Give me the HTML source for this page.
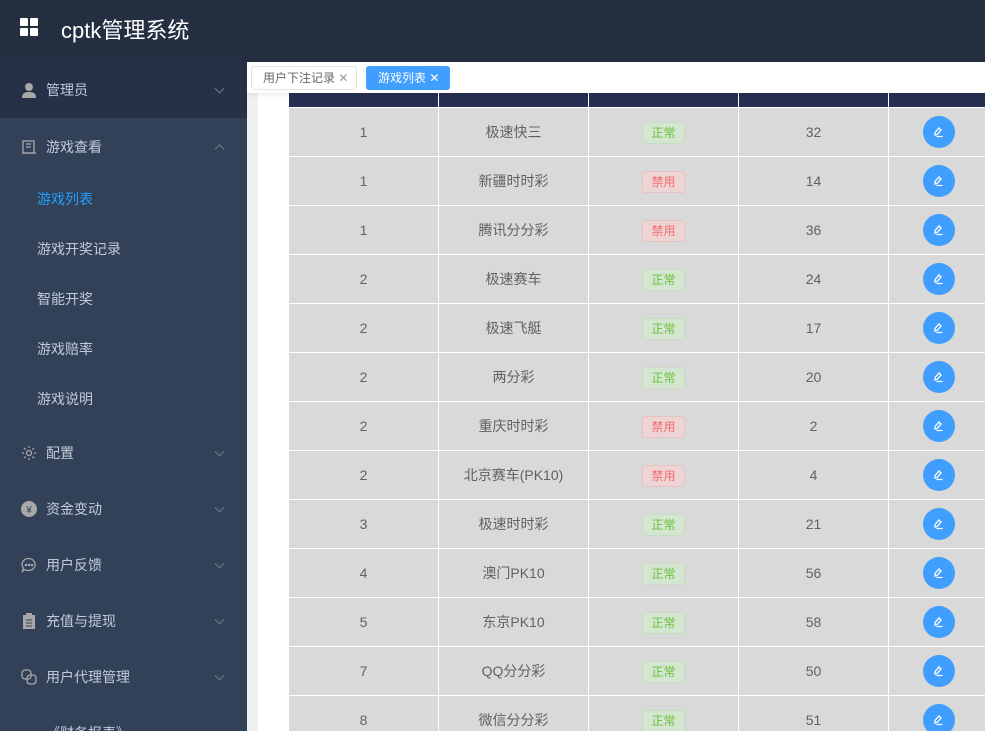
<!DOCTYPE html>
<html><head><meta charset="utf-8"><style>
*{margin:0;padding:0;box-sizing:border-box}
html{width:985px;height:731px;overflow:hidden}
body{width:985px;height:731px;overflow:hidden;position:relative;background:#fff;font-family:"Liberation Sans","Noto Sans CJK SC",sans-serif}
.hdr{position:absolute;left:0;top:0;width:985px;height:62px;background:#242f42}
.logo{position:absolute;left:20px;top:18px;width:18px;height:18px}
.logo i{position:absolute;width:8px;height:8px;background:#fff;border-radius:1px}
.title{position:absolute;left:61px;top:13px;font-size:22px;color:#fff}
.side{position:absolute;left:0;top:62px;width:247px;height:669px;background:#324157;overflow:hidden}
.mi{position:absolute;left:0;width:247px;height:56px;color:#bfcbd9;font-size:14px}
.mi .t{position:absolute;left:46px;top:50%;transform:translateY(-50%)}
.mi .ic{position:absolute;left:21px;top:50%;transform:translateY(-50%);width:16px;height:16px}
.mi .ar{position:absolute;left:216px;top:50%;width:7px;height:7px;border-right:1px solid #6f7c8f;border-bottom:1px solid #6f7c8f;transform:translateY(-70%) rotate(45deg)}
.mi .ar.up{transform:translateY(-20%) rotate(-135deg)}
.sub{position:absolute;left:37px;font-size:14px;color:#bfcbd9;transform:translateY(-50%)}
.strip{position:absolute;left:247px;top:62px;width:11px;height:669px;background:#f0f0f0}
.tabs{position:absolute;left:247px;top:62px;width:738px;height:31px;background:#fff;box-shadow:0 2px 4px rgba(0,0,0,.08);z-index:3}
.tab{position:absolute;top:4px;height:24px;font-size:12px;line-height:22px;padding-left:11px;border:1px solid #e4e4e4;color:#666;border-radius:3px;background:#fff}
.tab.act{background:#409eff;color:#fff;border-color:#409eff}
.thd{position:absolute;left:289px;top:93px;width:696px;height:14px;background:#262f50}
.thd i{position:absolute;top:0;width:1px;height:14px;background:#fff}
.row{position:absolute;left:289px;width:696px;height:49px;background:#d9d9d9;border-top:1px solid #fff;font-size:14px;color:#606266}
.row div{position:absolute;top:0;height:48px;line-height:48px;text-align:center;border-left:1px solid #fff}
.c1{left:0;width:149px;border-left:none!important}.c2{left:149px;width:150px}.c3{left:299px;width:150px}.c4{left:449px;width:150px}.c5{left:599px;width:97px}
.tag{display:inline-block;width:43px;height:22px;line-height:20px;font-size:12px;border-radius:3px;vertical-align:middle}
.ok{background:#d5e6d0;border:1px solid #c9dcc3;color:#67c23a}
.no{background:#eed4d4;border:1px solid #e6c3c3;color:#f56c6c}
.btn{position:absolute;left:34px;top:8px;width:32px;height:32px;border-radius:50%;background:#409eff}
</style></head><body>
<div class="hdr">
<div class="logo"><i style="left:0;top:0"></i><i style="left:10px;top:0"></i><i style="left:0;top:10px"></i><i style="left:10px;top:10px"></i></div>
<div class="title">cptk管理系统</div>
</div>
<div class="side">
<div class="mi" style="top:0;background:#263147"><svg class="ic" viewBox="0 0 16 16"><circle cx="8" cy="5" r="4" fill="#a8a8a8"/><path d="M1 16c0-5 3-6 7-6s7 1 7 6z" fill="#a8a8a8"/></svg><span class="t">管理员</span><span class="ar"></span></div>
<div class="mi" style="top:57px"><svg class="ic" viewBox="0 0 16 16" fill="none" stroke="#a8a8a8" stroke-width="1.3"><rect x="2" y="2" width="11" height="12"/><path d="M5 5h5M5 8h5M1 14h14"/></svg><span class="t">游戏查看</span><span class="ar up"></span></div>
<div class="sub" style="top:137px;color:#20a0ff">游戏列表</div>
<div class="sub" style="top:187px">游戏开奖记录</div>
<div class="sub" style="top:237px">智能开奖</div>
<div class="sub" style="top:287px">游戏赔率</div>
<div class="sub" style="top:337px">游戏说明</div>
<div class="mi" style="top:363px"><svg class="ic" viewBox="0 0 16 16" fill="none" stroke="#a8a8a8" stroke-width="1.3"><circle cx="8" cy="8" r="2.5"/><path d="M8 1v2M8 13v2M1 8h2M13 8h2M3 3l1.5 1.5M11.5 11.5L13 13M3 13l1.5-1.5M11.5 4.5L13 3"/></svg><span class="t">配置</span><span class="ar"></span></div>
<div class="mi" style="top:419px"><svg class="ic" viewBox="0 0 16 16"><circle cx="8" cy="8" r="8" fill="#a8a8a8"/><text x="8" y="12" font-size="10" text-anchor="middle" fill="#324157">¥</text></svg><span class="t">资金变动</span><span class="ar"></span></div>
<div class="mi" style="top:475px"><svg class="ic" viewBox="0 0 16 16" fill="none" stroke="#a8a8a8" stroke-width="1.3"><path d="M8 1.5a6.5 6 0 1 1-4 11l-2.5 2 .8-3.5A6.5 6 0 0 1 8 1.5z"/><circle cx="5" cy="8" r=".6" fill="#a8a8a8"/><circle cx="8" cy="8" r=".6" fill="#a8a8a8"/><circle cx="11" cy="8" r=".6" fill="#a8a8a8"/></svg><span class="t">用户反馈</span><span class="ar"></span></div>
<div class="mi" style="top:531px"><svg class="ic" viewBox="0 0 16 16"><rect x="2" y="2" width="12" height="14" fill="#a8a8a8"/><rect x="5" y="0" width="6" height="3" fill="#a8a8a8"/><path d="M5 7h6M5 10h6M5 13h6" stroke="#324157"/></svg><span class="t">充值与提现</span><span class="ar"></span></div>
<div class="mi" style="top:587px"><svg class="ic" viewBox="0 0 16 16" fill="none" stroke="#a8a8a8" stroke-width="1.3"><rect x="1" y="1" width="9" height="9" rx="3"/><rect x="6" y="6" width="9" height="9" rx="3"/></svg><span class="t">用户代理管理</span><span class="ar"></span></div>
<div class="mi" style="top:643px"><span class="t" style="top:18px;transform:none">《财务报表》</span><span class="ar" style="top:24px;transform:rotate(45deg)"></span></div>
</div>
<div class="strip"></div>
<div class="tabs">
<div class="tab" style="left:4px;width:106px">用户下注记录 <span style="color:#999">✕</span></div>
<div class="tab act" style="left:119px;width:84px">游戏列表 <span>✕</span></div>
</div>
<div class="thd"><i style="left:149px"></i><i style="left:299px"></i><i style="left:449px"></i><i style="left:599px"></i></div>

<div class="row" style="top:107px"><div class="c1">1</div><div class="c2">极速快三</div><div class="c3"><span class="tag ok">正常</span></div><div class="c4">32</div><div class="c5"><span class="btn"></span></div></div>
<div class="row" style="top:156px"><div class="c1">1</div><div class="c2">新疆时时彩</div><div class="c3"><span class="tag no">禁用</span></div><div class="c4">14</div><div class="c5"><span class="btn"></span></div></div>
<div class="row" style="top:205px"><div class="c1">1</div><div class="c2">腾讯分分彩</div><div class="c3"><span class="tag no">禁用</span></div><div class="c4">36</div><div class="c5"><span class="btn"></span></div></div>
<div class="row" style="top:254px"><div class="c1">2</div><div class="c2">极速赛车</div><div class="c3"><span class="tag ok">正常</span></div><div class="c4">24</div><div class="c5"><span class="btn"></span></div></div>
<div class="row" style="top:303px"><div class="c1">2</div><div class="c2">极速飞艇</div><div class="c3"><span class="tag ok">正常</span></div><div class="c4">17</div><div class="c5"><span class="btn"></span></div></div>
<div class="row" style="top:352px"><div class="c1">2</div><div class="c2">两分彩</div><div class="c3"><span class="tag ok">正常</span></div><div class="c4">20</div><div class="c5"><span class="btn"></span></div></div>
<div class="row" style="top:401px"><div class="c1">2</div><div class="c2">重庆时时彩</div><div class="c3"><span class="tag no">禁用</span></div><div class="c4">2</div><div class="c5"><span class="btn"></span></div></div>
<div class="row" style="top:450px"><div class="c1">2</div><div class="c2">北京赛车(PK10)</div><div class="c3"><span class="tag no">禁用</span></div><div class="c4">4</div><div class="c5"><span class="btn"></span></div></div>
<div class="row" style="top:499px"><div class="c1">3</div><div class="c2">极速时时彩</div><div class="c3"><span class="tag ok">正常</span></div><div class="c4">21</div><div class="c5"><span class="btn"></span></div></div>
<div class="row" style="top:548px"><div class="c1">4</div><div class="c2">澳门PK10</div><div class="c3"><span class="tag ok">正常</span></div><div class="c4">56</div><div class="c5"><span class="btn"></span></div></div>
<div class="row" style="top:597px"><div class="c1">5</div><div class="c2">东京PK10</div><div class="c3"><span class="tag ok">正常</span></div><div class="c4">58</div><div class="c5"><span class="btn"></span></div></div>
<div class="row" style="top:646px"><div class="c1">7</div><div class="c2">QQ分分彩</div><div class="c3"><span class="tag ok">正常</span></div><div class="c4">50</div><div class="c5"><span class="btn"></span></div></div>
<div class="row" style="top:695px;height:36px"><div class="c1">8</div><div class="c2">微信分分彩</div><div class="c3"><span class="tag ok">正常</span></div><div class="c4">51</div><div class="c5"><span class="btn"></span></div></div>

<svg style="position:absolute;left:0;top:0;pointer-events:none" width="985" height="731">
<defs><g id="pen" fill="none" stroke="#fff" stroke-width="1.3" stroke-linecap="round"><path d="M-3 3l0-2.5 4-4.5 2 2-4 4.5z"/><path d="M-1 4.5h5"/></g></defs>
<use href="#pen" x="938" y="132"/><use href="#pen" x="938" y="181"/><use href="#pen" x="938" y="230"/><use href="#pen" x="938" y="279"/><use href="#pen" x="938" y="328"/><use href="#pen" x="938" y="377"/><use href="#pen" x="938" y="426"/><use href="#pen" x="938" y="475"/><use href="#pen" x="938" y="524"/><use href="#pen" x="938" y="573"/><use href="#pen" x="938" y="622"/><use href="#pen" x="938" y="671"/><use href="#pen" x="938" y="720"/>
</svg>
</body></html>
